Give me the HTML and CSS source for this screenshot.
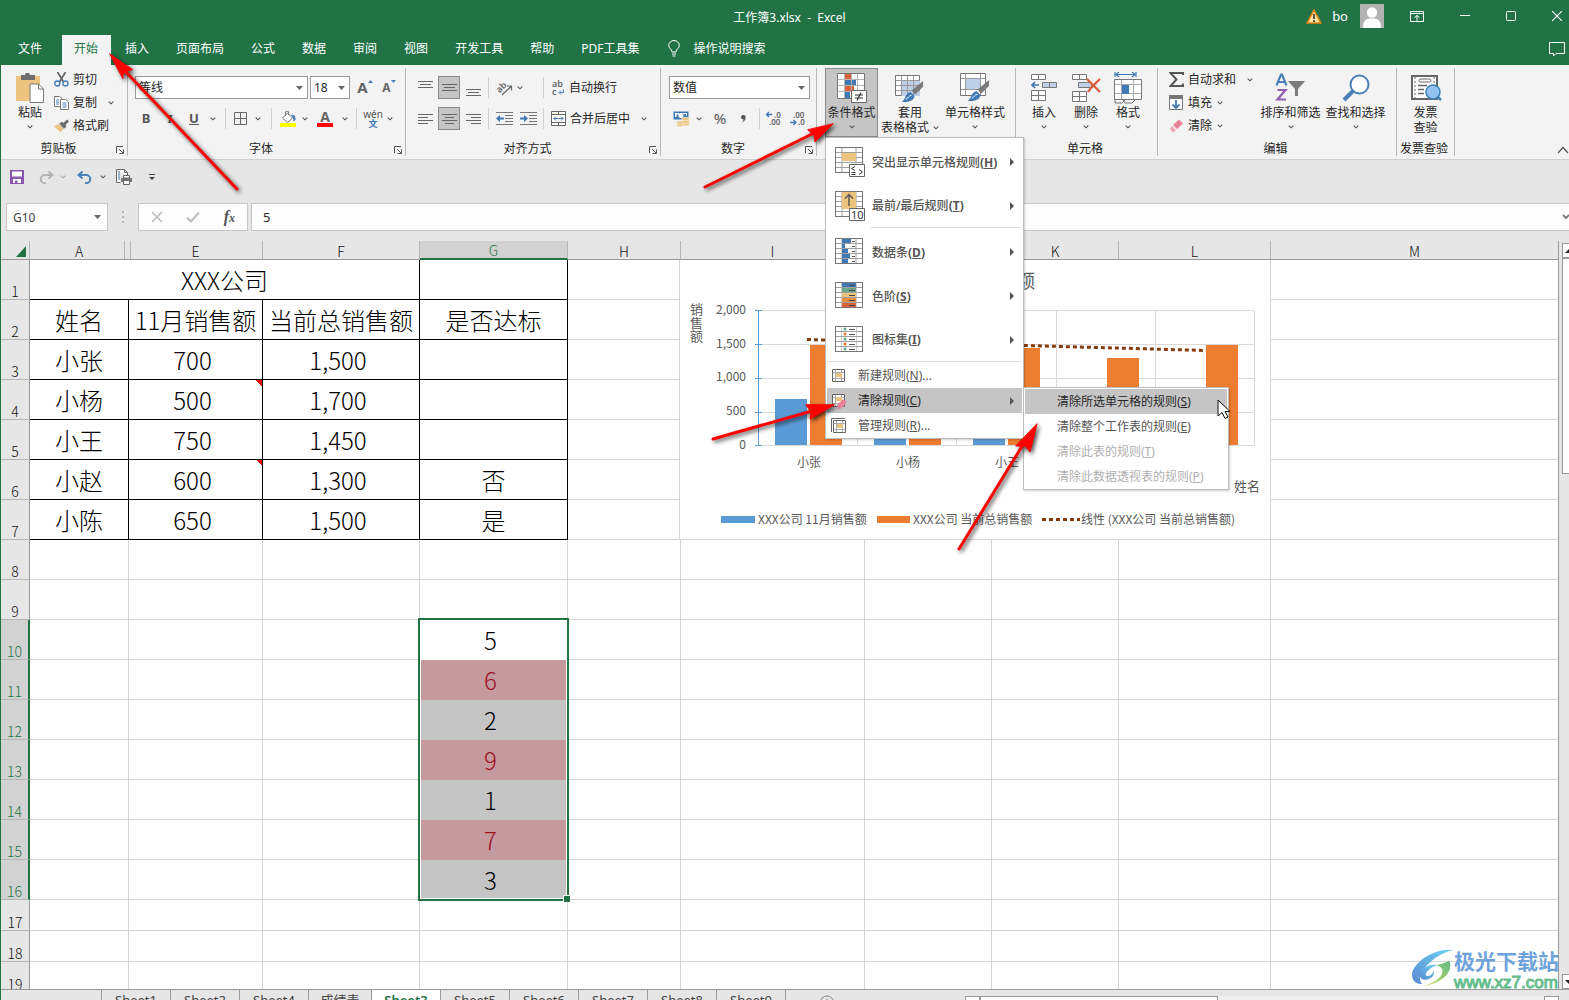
FILE: index.html
```html
<!DOCTYPE html>
<html lang="zh-CN">
<head>
<meta charset="utf-8">
<title>工作簿3.xlsx - Excel</title>
<link rel="stylesheet" href="styles.css">
</head>
<body>
<svg class="defs" width="0" height="0" aria-hidden="true">
  <symbol id="chev" viewBox="0 0 6 4"><path d="M.7.7 3 2.8 5.3.7" fill="none" stroke="#555" stroke-width="1.1"/></symbol>
  <symbol id="tri" viewBox="0 0 7 4"><path d="M0 0h7L3.500 4z" fill="#666"/></symbol>
  <symbol id="launch" viewBox="0 0 8 8"><path d="M.5 7V.5H7M3 3l4 4M7.500 3.500v4h-4" fill="none" stroke="#555"/></symbol>
  <symbol id="next" viewBox="0 0 4 8"><path d="M0 0l4 4-4 4z" fill="#555"/></symbol>
  <symbol id="grid" viewBox="0 0 28 26">
    <rect x=".5" y=".5" width="27" height="25" fill="#fff" stroke="#767676"/>
    <path d="M7 1v24M21 1v24M1 5.500h26M1 10.500h26M1 15.500h26M1 20.500h26" stroke="#a0a0a0" fill="none"/>
  </symbol>
  <symbol id="brush" viewBox="0 0 24 24">
    <path d="M23 1v6l-8 8-4-4z" fill="#7b7b7b"/><path d="M10 12.500l4 4c0 5-6 7-13 6.500 4-3 3-9 9-10.500z" fill="#4179b5"/><path d="M5 20c3-1 3-4 6-4" stroke="#fff" fill="none"/>
  </symbol>
</svg>
<div class="app">
  <header class="titlebar">
    <h1 class="doc-title">工作簿3.xlsx&nbsp; -&nbsp; Excel</h1>
    <div class="window-tools">
      <svg width="16" height="15" viewBox="0 0 16 15"><path d="M8 1l6.800 13H1.200z" fill="#fbe3a0" stroke="#e08214" stroke-width="1.600"/><path d="M8 5v5M8 11v2" stroke="#333" stroke-width="1.600"/></svg>
      <span class="user">bo</span>
      <svg width="24" height="24" viewBox="0 0 24 24"><path fill="#b3b3b3" d="M0 0h24v24H0z"/><circle cx="12" cy="8.500" r="5.200" fill="#fff"/><path d="M3 24c0-7 2-9.500 9-9.500s9 2.500 9 9.500z" fill="#fff"/></svg>
      <div class="window-buttons">
        <button aria-label="功能区显示选项"><svg width="14" height="12" viewBox="0 0 14 12" fill="none" stroke="#fff"><path d="M.5 1.500h13v10H.5zM.5 3.500h13M7 10.500v-5M4.500 7.500L7 5.500l2.500 2"/></svg></button>
        <button aria-label="最小化"><svg width="10" height="10" viewBox="0 0 10 10"><path d="M0 4.500h10" stroke="#fff"/></svg></button>
        <button aria-label="最大化"><svg width="10" height="10" viewBox="0 0 10 10"><rect x=".5" y=".5" width="9" height="9" rx="1" fill="none" stroke="#fff"/></svg></button>
        <button aria-label="关闭"><svg width="10" height="10" viewBox="0 0 10 10"><path d="M0 0l10 10M10 0L0 10" stroke="#fff" stroke-width="1.200"/></svg></button>
      </div>
    </div>
  </header>

  <nav class="tabs">
    <button class="file">文件</button>
    <button class="active">开始</button>
    <button>插入</button>
    <button>页面布局</button>
    <button>公式</button>
    <button>数据</button>
    <button>审阅</button>
    <button>视图</button>
    <button>开发工具</button>
    <button>帮助</button>
    <button>PDF工具集</button>
    <button class="tell-me"><svg width="12" height="17" viewBox="0 0 12 17" fill="none" stroke="#fff"><path d="M4 12c0-3-3.300-3.500-3.300-6.500a5.300 5 0 0 1 10.600 0C11.300 8.500 8 9 8 12zM4 14h4M4.500 16h3"/></svg>操作说明搜索</button>
    <button class="comment" aria-label="批注"><svg width="17" height="15" viewBox="0 0 17 15" fill="none" stroke="#fff"><path d="M.5.5h15v11H7L4.500 14v-2.500h-4z"/></svg></button>
  </nav>

  <section class="ribbon">
    <div class="group clipboard">
      <div class="body">
        <button class="big"><span class="pic"><svg width="30" height="30" viewBox="0 0 30 30"><path d="M1 3h24v25H1z" fill="#ecc47e"/><path d="M6 2h4c0-3 5-3 5 0h5v5H6z" fill="#6f6f6f"/><path d="M15 11h8.500l5 5v13.500H15z" fill="#fff" stroke="#777"/><path d="M23.500 11v5h5" fill="none" stroke="#777"/></svg></span><span>粘贴</span><svg class="chev"><use href="#chev"/></svg></button>
        <div class="stack">
          <button><svg width="15" height="15" viewBox="0 0 15 15" fill="none"><path d="M3.500 0l6 10M11.500 0l-6 10" stroke="#666" stroke-width="1.700"/><circle cx="3.300" cy="11.500" r="2.500" stroke="#4a7fb8" stroke-width="1.400"/><circle cx="11.500" cy="11.500" r="2.500" stroke="#4a7fb8" stroke-width="1.400"/></svg>剪切</button>
          <button><svg width="15" height="14" viewBox="0 0 15 14"><path d="M.5.5h5l3 2.500v7.500h-8z" fill="#fff" stroke="#777"/><path d="M6.500 3.500h5l3 2.500v7.500h-8z" fill="#fff" stroke="#777"/><path d="M2 4h3M2 6h3M2 8h3M8.500 7h4M8.500 9h4M8.500 11h4" stroke="#4a7fb8"/></svg>复制<svg class="chev far"><use href="#chev"/></svg></button>
          <button><svg width="15" height="14" viewBox="0 0 16 14"><path d="M0 7l5-2 5 5-3 4z" fill="#ecc47e"/><path d="M5.500 4.500L8 2.500l2 1L14 0l2 2-3.500 4 .5 2-2.500 2z" fill="#6f6f6f"/></svg>格式刷</button>
        </div>
      </div>
      <div class="label"><span>剪贴板</span><svg class="launch"><use href="#launch"/></svg></div>
    </div>

    <div class="group font">
      <div class="body rows">
        <div class="line">
          <label class="combo face"><input value="等线" aria-label="字体"><svg class="tri"><use href="#tri"/></svg></label>
          <label class="combo size"><input value="18" aria-label="字号"><svg class="tri"><use href="#tri"/></svg></label>
          <button class="grow" aria-label="增大字号"><b>A</b><svg width="5" height="3" viewBox="0 0 5 3"><path d="M0 3h5L2.500 0z" fill="#4a7fb8"/></svg></button>
          <button class="grow small" aria-label="减小字号"><b>A</b><svg width="5" height="3" viewBox="0 0 5 3"><path d="M0 0h5L2.500 3z" fill="#4a7fb8"/></svg></button>
        </div>
        <div class="font-tools">
          <button class="letter">B</button>
          <button class="letter italic">I</button>
          <button class="letter under">U</button>
          <svg class="chev"><use href="#chev"/></svg><i class="sep"></i>
          <button aria-label="边框"><svg width="13" height="13" viewBox="0 0 13 13"><path d="M.5.500h12v12H.5zM6.500 0v13M0 6.500h13" fill="none" stroke="#666"/></svg></button>
          <svg class="chev"><use href="#chev"/></svg><i class="sep"></i>
          <button aria-label="填充颜色"><svg width="17" height="16" viewBox="0 0 17 16"><path d="M2.500 7l5-5 5 5-5 4.500zM5.500 5V.7h3V4" fill="#fff" stroke="#777"/><path d="M11 4c3-1 5 1 4.500 5l-2 1.500C13.500 7 12.500 6 11 4z" fill="#4a7fb8"/><path d="M0 12h16v4H0z" fill="#ff0"/></svg></button>
          <svg class="chev"><use href="#chev"/></svg>
          <button class="color"><b>A</b><i></i></button>
          <svg class="chev"><use href="#chev"/></svg><i class="sep"></i>
          <button class="phonetic"><span>wén</span><b>文</b></button>
          <svg class="chev"><use href="#chev"/></svg>
        </div>
      </div>
      <div class="label"><span>字体</span><svg class="launch"><use href="#launch"/></svg></div>
    </div>

    <div class="group align">
      <div class="body rows">
        <div class="align-tools">
          <button aria-label="顶端对齐"><svg width="15" height="16" viewBox="0 0 15 16"><path d="M0 1.500h15M2 4.500h11M0 7.500h15" stroke="#666"/></svg></button>
          <button class="on" aria-label="垂直居中"><svg width="15" height="16" viewBox="0 0 15 16"><path d="M0 4.500h15M2 7.500h11M0 10.500h15" stroke="#666"/></svg></button>
          <button aria-label="底端对齐"><svg width="15" height="16" viewBox="0 0 15 16"><path d="M0 9.500h15M2 12.500h11M0 15.500h15" stroke="#666"/></svg></button>
          <i class="sep"></i>
          <button aria-label="方向"><svg width="17" height="17" viewBox="0 0 17 17"><text x="1" y="12" class="rot" transform="rotate(-45 5 10)">ab</text><path d="M6 16l9-8.500M15.500 11.500V7H11" fill="none" stroke="#666" stroke-width="1.200"/></svg></button>
          <svg class="chev lead"><use href="#chev"/></svg>
          <i class="sep"></i>
          <button class="wide"><svg width="14" height="16" viewBox="0 0 14 16"><text x="1" y="7" class="mini">ab</text><text x="1" y="15" class="mini">c</text><path d="M12.500 9.500v3H8.500M10 10.500l-2 2 2 2" fill="none" stroke="#4a7fb8"/></svg>自动换行</button>

          <button aria-label="左对齐"><svg width="15" height="12" viewBox="0 0 15 12"><path d="M0 1.500h15M0 4.500h10M0 7.500h15M0 10.500h10" stroke="#666"/></svg></button>
          <button class="on" aria-label="居中"><svg width="15" height="12" viewBox="0 0 15 12"><path d="M0 1.500h15M3 4.500h9M0 7.500h15M3 10.500h9" stroke="#666"/></svg></button>
          <button aria-label="右对齐"><svg width="15" height="12" viewBox="0 0 15 12"><path d="M0 1.500h15M5 4.500h10M0 7.500h15M5 10.500h10" stroke="#666"/></svg></button>
          <i class="sep"></i>
          <button aria-label="减少缩进"><svg width="17" height="13" viewBox="0 0 17 13"><path d="M0 .5h17M9 3.500h8M9 6.500h8M9 9.500h8M0 12.500h17" stroke="#777"/><path d="M0 6.500L4 3v2.500h4v2H4V10z" fill="#4179b5"/></svg></button>
          <button aria-label="增加缩进"><svg width="17" height="13" viewBox="0 0 17 13"><path d="M0 .5h17M9 3.500h8M9 6.500h8M9 9.500h8M0 12.500h17" stroke="#777"/><path d="M8 6.500L4 3v2.500H0v2h4V10z" fill="#4179b5"/></svg></button>
          <i class="sep"></i>
          <button class="wide"><svg width="15" height="15" viewBox="0 0 15 15"><path d="M.5.5h14v14H.5zM.5 3.500h14M.5 11.500h14M7.500 0v3.500M7.500 11.500V15" fill="#fff" stroke="#666"/><path d="M2.500 7.500h10M5 5.500l-2 2 2 2M10 5.500l2 2-2 2" fill="none" stroke="#4179b5"/></svg>合并后居中<svg class="chev far"><use href="#chev"/></svg></button>
        </div>
      </div>
      <div class="label"><span>对齐方式</span><svg class="launch"><use href="#launch"/></svg></div>
    </div>

    <div class="group number">
      <div class="body rows">
        <div class="line"><label class="combo fmt"><input value="数值" aria-label="数字格式"><svg class="tri"><use href="#tri"/></svg></label></div>
        <div class="number-tools">
          <button aria-label="会计数字格式"><svg width="17" height="16" viewBox="0 0 17 16"><path d="M.5.500h15v8H.5z" fill="#4179b5"/><path d="M2 2h4v1.500H3.500V6H2zM10 2h4v2.500h-1V3h-3z" fill="#fff"/><circle cx="8" cy="4.500" r="2.500" fill="#fff"/><g fill="#ecc47e" stroke="#f3f3f3" stroke-width=".6"><ellipse cx="12.500" cy="13" rx="4" ry="1.800"/><ellipse cx="12.500" cy="10.500" rx="4" ry="1.800"/><ellipse cx="12.500" cy="8" rx="4" ry="1.800"/><ellipse cx="7" cy="14" rx="3.500" ry="1.600"/><ellipse cx="7" cy="11.500" rx="3.500" ry="1.600"/></g></svg></button>
          <svg class="chev"><use href="#chev"/></svg>
          <button class="pct">%</button>
          <button aria-label="千位分隔样式"><svg width="5" height="8" viewBox="0 0 5 8"><path d="M0 2a2.300 2.200 0 1 1 4.600.5C4.500 5 3 7 .5 7.500 2 6.500 2.500 5.500 2.500 4.300 1 4.300 0 3.500 0 2z" fill="#555"/></svg></button>
          <i class="sep"></i>
          <button aria-label="增加小数位数"><svg width="16" height="15" viewBox="0 0 16 15"><text x="8" y="7" class="dec">.0</text><text x="3" y="14" class="dec">.00</text><path d="M0 3.500h6M3 1L.5 3.500 3 6" fill="none" stroke="#4179b5" stroke-width="1.300"/></svg></button>
          <button aria-label="减少小数位数"><svg width="16" height="15" viewBox="0 0 16 15"><text x="3" y="7" class="dec">.00</text><text x="8" y="14" class="dec">.0</text><path d="M0 11.500h6M3.500 9L6 11.500 3.500 14" fill="none" stroke="#4179b5" stroke-width="1.300"/></svg></button>
        </div>
      </div>
      <div class="label"><span>数字</span><svg class="launch"><use href="#launch"/></svg></div>
    </div>

    <div class="group styles">
      <div class="body">
        <div class="menu-anchor">
          <button class="big pressed"><span class="pic"><svg width="30" height="30" viewBox="0 0 30 30"><path d="M.5.5h27v25H.5z" fill="#fff"/><path d="M8 1h6v5H8zM8 13h9v6H8z" fill="#d9603b"/><path d="M8 7h11v5H8zM8 19h5v6H8z" fill="#4179b5"/><path d="M7.500 1v24M14.500 1v24M20.500 1v24M1 6.500h26M1 12.500h26M1 18.500h26" stroke="#b5b5b5" fill="none"/><path d="M.5.5h27v25H.5z" fill="none" stroke="#767676"/><path d="M14.500 17.500h15v12h-15z" fill="#fff" stroke="#666"/><path d="M18 22h8M18 25h8M24 19.500L20 27.500" stroke="#333" stroke-width="1.200"/></svg></span><span>条件格式</span><svg class="chev"><use href="#chev"/></svg></button>
          <ul class="menu">
            <li><button><span class="ico"><svg width="30" height="30" viewBox="0 0 30 30"><use href="#grid" width="28" height="26"/><path d="M7 6h14v8H7z" fill="#ecc47e"/><path d="M14.500 17.500h15v12h-15z" fill="#fff" stroke="#666"/><path d="M20 19.500l-3.500 2 3.500 2M16.500 25.500h4M16.500 27.500h4M24 22.500l3.500 2.500-3.500 2.500" fill="none" stroke="#333"/></svg></span>突出显示单元格规则<b>(<u>H</u>)</b><svg class="next"><use href="#next"/></svg></button></li>
            <li class="short"><button><span class="ico"><svg width="30" height="30" viewBox="0 0 30 30"><use href="#grid" width="28" height="26"/><path d="M7 1h14v17H7z" fill="#ecc47e"/><path d="M14 15V4M10 7.500L14 3.500l4 4" fill="none" stroke="#555" stroke-width="1.400"/><path d="M14.500 17.500h15v12h-15z" fill="#fff" stroke="#666"/><text x="16" y="28" class="ten">10</text></svg></span>最前/最后规则<b>(<u>T</u>)</b><svg class="next"><use href="#next"/></svg></button></li>
            <li class="rule inset"></li>
            <li><button><span class="ico"><svg width="30" height="30" viewBox="0 -1 30 30"><use href="#grid" width="28" height="26"/><path d="M7 1h9v4H7zM7 6h3v4H7zM7 11h6v4H7zM7 16h8v4H7zM7 21h6v4H7z" fill="#4179b5"/><path d="M17 3.500h3M17 8.500h3M17 13.500h3M17 18.500h3M17 23.500h3" stroke="#555"/></svg></span>数据条<b>(<u>D</u>)</b><svg class="next"><use href="#next"/></svg></button></li>
            <li><button><span class="ico"><svg width="30" height="30" viewBox="0 -1 30 30"><use href="#grid" width="28" height="26"/><path d="M7 1h14v4H7z" fill="#4179b5"/><path d="M7 6h14v4H7z" fill="#6aa58c"/><path d="M7 11h14v4H7z" fill="#ecc47e"/><path d="M7 16h14v4H7z" fill="#e88b3e"/><path d="M7 21h14v4H7z" fill="#d9603b"/><path d="M14 3.500h6M14 8.500h6M14 13.500h6M14 18.500h6M14 23.500h6" stroke="#444"/></svg></span>色阶<b>(<u>S</u>)</b><svg class="next"><use href="#next"/></svg></button></li>
            <li class="short"><button><span class="ico"><svg width="30" height="30" viewBox="0 -1 30 30"><use href="#grid" width="28" height="26"/><path d="M7 1h14v4H7zM7 6h14v4H7zM7 11h14v4H7zM7 16h14v4H7zM7 21h14v4H7z" fill="#fff"/><g fill="#5aa58c"><circle cx="10" cy="3" r="1.500"/><circle cx="10" cy="13" r="1.500"/><circle cx="10" cy="23" r="1.500"/></g><g fill="#e8702a"><circle cx="10" cy="8" r="1.500"/><circle cx="10" cy="18" r="1.500"/></g><path d="M14 3.500h6M14 8.500h6M14 13.500h6M14 18.500h6M14 23.500h6" stroke="#555"/></svg></span>图标集<b>(<u>I</u>)</b><svg class="next"><use href="#next"/></svg></button></li>
            <li class="rule"></li>
            <li class="slim"><button><span class="ico"><svg width="16" height="16" viewBox="0 0 16 16"><path d="M1.500 1.500h12v12h-12z" fill="#fff" stroke="#666"/><path d="M4.500 2v11M10.500 2v11M2 4.500h11M2 10.500h11" stroke="#aaa"/><path d="M5 5h6v4H5z" fill="#ecc47e"/></svg></span>新建规则(<u>N</u>)...</button></li>
            <li class="slim open"><button><span class="ico"><svg width="16" height="16" viewBox="0 0 16 16"><path d="M1.500 1.500h12v12h-12z" fill="#fff" stroke="#666"/><path d="M4.500 2v11M10.500 2v11M2 4.500h11M2 10.500h11" stroke="#aaa"/><path d="M5 4h6v4H5z" fill="#ecc47e"/><path d="M6 12l6-6 4 3-6 6.500-3 .5z" fill="#e88398"/></svg></span>清除规则(<u>C</u>)<svg class="next"><use href="#next"/></svg></button>
              <ul class="menu sub">
                <li class="slim open"><button>清除所选单元格的规则(<u>S</u>)</button></li>
                <li class="slim"><button>清除整个工作表的规则(<u>E</u>)</button></li>
                <li class="slim"><button disabled>清除此表的规则(<u>T</u>)</button></li>
                <li class="slim"><button disabled>清除此数据透视表的规则(<u>P</u>)</button></li>
              </ul>
            </li>
            <li class="slim"><button><span class="ico"><svg width="16" height="16" viewBox="0 0 16 16"><path d="M.5 14V.5H14" fill="none" stroke="#666"/><path d="M2.500 2.500h12v12h-12z" fill="#fff" stroke="#666"/><path d="M5.500 3v11M11.500 3v11M3 5.500h11M3 11.500h11" stroke="#aaa"/><path d="M6 6h6v4H6z" fill="#ecc47e"/></svg></span>管理规则(<u>R</u>)...</button></li>
          </ul>
        </div>
        <button class="big table-style"><span class="pic"><svg width="30" height="30" viewBox="0 0 30 30"><path d="M.5 2.500h24v20H.5z" fill="#fff" stroke="#767676"/><path d="M7 8h18v15H7z" fill="#bdd0e8"/><path d="M6.500 3v20M12.500 3v20M18.500 3v20M1 7.500h24M1 12.500h24M1 17.500h24" stroke="#999"/><use href="#brush" x="6" y="7" width="23" height="23"/></svg></span><span>套用</span><span class="with-chev">表格格式<svg class="chev"><use href="#chev"/></svg></span></button>
        <button class="big cell-style"><span class="pic"><svg width="30" height="30" viewBox="0 0 30 30"><path d="M.5.500h25v22H.5z" fill="#fff" stroke="#767676"/><path d="M5.500 1v21M20.500 1v21M1 5.500h25M1 16.500h25" stroke="#999"/><path d="M6 6h14v10H6z" fill="#bdd0e8"/><use href="#brush" x="7" y="6" width="23" height="23"/></svg></span><span>单元格样式</span><svg class="chev"><use href="#chev"/></svg></button>
      </div>
      <div class="label"><span>样式</span></div>
    </div>

    <div class="group cells">
      <div class="body">
        <button class="big"><span class="pic"><svg width="28" height="30" viewBox="0 0 28 30"><path d="M1.500 1.500h14v5h-14zM8.500 1.500v5M1.500 17.500h14v10h-14zM8.500 17.500v10M1.500 22.500h14" fill="#fff" stroke="#777"/><path d="M12.500 9.500h14v5h-14zM19.500 9.500v5" fill="#bdd0e8" stroke="#777"/><path d="M2 12h7M5 9l-3 3 3 3" fill="none" stroke="#4179b5" stroke-width="1.700"/></svg></span><span>插入</span><svg class="chev"><use href="#chev"/></svg></button>
        <button class="big"><span class="pic"><svg width="30" height="30" viewBox="0 0 30 30"><path d="M1.500 1.500h14v5h-14zM8.500 1.500v5M1.500 18.500h14v10h-14zM8.500 18.500v10M1.500 23.500h14" fill="#fff" stroke="#777"/><path d="M7.500 9.500h13v5h-13z" fill="#bdd0e8" stroke="#777"/><path d="M16 6l13 13M29 6C24 11 20 14 17 19" fill="none" stroke="#d9603b" stroke-width="2.200"/></svg></span><span>删除</span><svg class="chev"><use href="#chev"/></svg></button>
        <button class="big"><span class="pic"><svg width="28" height="32" viewBox="0 0 28 32"><path d="M1 0v5M22 0v5M2 2.500h19M5 0L2 2.500 5 5M18 0l3 2.500L18 5" fill="none" stroke="#4179b5" stroke-width="1.200"/><path d="M.5 7.500h27v20H.5z" fill="#fff" stroke="#777"/><path d="M7.500 8v19M19.500 8v19M1 12.500h26M1 21.500h26" stroke="#aaa"/><path d="M8 13h7v9H8z" fill="#4179b5"/><path d="M1 28v3h7l3-3h-2l2 3h7l3-3" fill="none" stroke="#777"/></svg></span><span>格式</span><svg class="chev"><use href="#chev"/></svg></button>
      </div>
      <div class="label"><span>单元格</span></div>
    </div>

    <div class="group editing">
      <div class="body">
        <div class="stack">
          <button><svg width="15" height="15" viewBox="0 0 15 15"><path d="M14 3V1H1.500l6 6.500-6 6.500H14v-2.500" fill="none" stroke="#555" stroke-width="2"/></svg>自动求和<svg class="chev far"><use href="#chev"/></svg></button>
          <button><svg width="15" height="15" viewBox="0 0 15 15"><path d="M.5.500h13v14H.5z" fill="#fff" stroke="#777"/><path d="M0 0h14v4H0z" fill="#777"/><path d="M7 5v8M3.500 9.500L7 13l3.500-3.500" fill="none" stroke="#4179b5" stroke-width="1.800"/></svg>填充<svg class="chev"><use href="#chev"/></svg></button>
          <button><svg width="15" height="14" viewBox="0 0 15 14"><path d="M4 6l6-5.500 4 4L8 10z" fill="#e88398"/><path d="M3 7l4 4-2 2H3L1 10z" fill="#f0a9b7"/></svg>清除<svg class="chev"><use href="#chev"/></svg></button>
        </div>
        <button class="big sort"><span class="pic"><svg width="32" height="30" viewBox="0 0 32 30" fill="none"><path d="M1.500 12.500L6 1.500h1l4.500 11M3 9h7" stroke="#4a7fb8" stroke-width="2.200"/><path d="M2.500 17h8L2.500 26.500h8.500" stroke="#8f5fb0" stroke-width="2.200"/><path d="M13 8h17l-7 8v7h-3v-7z" fill="#7b7b7b"/></svg></span><span>排序和筛选</span><svg class="chev"><use href="#chev"/></svg></button>
        <button class="big find"><span class="pic"><svg width="28" height="28" viewBox="0 0 28 28"><path d="M2 26l9-9" stroke="#4a7fb8" stroke-width="4"/><circle cx="17.500" cy="10.500" r="9" fill="#fff" stroke="#4a7fb8" stroke-width="2"/></svg></span><span>查找和选择</span><svg class="chev"><use href="#chev"/></svg></button>
      </div>
      <div class="label"><span>编辑</span></div>
    </div>

    <div class="group invoice">
      <div class="body">
        <button class="big"><span class="pic"><svg width="32" height="28" viewBox="0 0 32 28"><path d="M2 2h25v23H2z" fill="#fff" stroke="#666" stroke-width="2"/><path d="M5 3v21M24 3v21" stroke="#666" stroke-dasharray="2 2"/><rect x="9" y="5" width="12" height="3" rx="1.500" fill="#fff" stroke="#666"/><path d="M8 11.500h9M8 15.500h6M8 19.500h6" stroke="#666" stroke-width="1.500"/><circle cx="23" cy="18" r="7" fill="#94c3f3" stroke="#3a7fb5" stroke-width="1.500"/><path d="M28 23l3 3" stroke="#3a7fb5" stroke-width="2.500"/></svg></span><span>发票</span><span>查验</span></button>
      </div>
      <div class="label"><span>发票查验</span></div>
    </div>
    <button class="collapse" aria-label="折叠功能区"><svg width="12" height="8" viewBox="0 0 12 8"><path d="M1 7l5-5.500L11 7" fill="none" stroke="#555" stroke-width="1.200"/></svg></button>
  </section>

  <div class="quick-access">
    <button aria-label="保存"><svg width="14" height="14" viewBox="0 0 14 14"><path d="M0 0h14v14H0z" fill="#8a55ae"/><path d="M2 1.500h10v5H2zM3 9h8v4H3z" fill="#fff"/><path d="M5 10.500h2.500V14H5z" fill="#8a55ae"/></svg></button>
    <button aria-label="恢复"><svg width="15" height="13" viewBox="0 0 15 13"><path d="M13 4H6a4.200 4 0 0 0 0 8.200h1M9.500.5L13.500 4 9.500 7.500" fill="none" stroke="#b3b3b3" stroke-width="2"/></svg></button>
    <svg class="chev faint"><use href="#chev"/></svg>
    <button aria-label="撤销"><svg width="15" height="13" viewBox="0 0 15 13"><path d="M2 4h7a4.200 4 0 0 1 0 8.200H8M5.500.5L1.500 4l4 3.500" fill="none" stroke="#4a7fb8" stroke-width="2"/></svg></button>
    <svg class="chev"><use href="#chev"/></svg>
    <button aria-label="打印预览"><svg width="17" height="16" viewBox="0 0 17 16"><path d="M.5.500h8l3 3V7M.5.5v13h4M8.500.5v3h3" fill="#fff" stroke="#666"/><path d="M3 2v9" stroke="#4a7fb8"/><path d="M5 9h11v4H5z" fill="#777"/><path d="M7.500 6.500h6V9h-6zM7.500 11.500h6v4h-6z" fill="#fff" stroke="#666"/></svg></button>
    <button aria-label="自定义快速访问工具栏"><svg width="6" height="7" viewBox="0 0 6 7"><path d="M0 .5h6" stroke="#444"/><path d="M0 3h6L3 6z" fill="#444"/></svg></button>
  </div>

  <div class="formula-bar">
    <label class="name-box"><input value="G10" aria-label="名称框"><svg class="tri"><use href="#tri"/></svg></label>
    <svg class="dots" width="3" height="12" viewBox="0 0 3 12"><path d="M0 0h2v2H0zM0 5h2v2H0zM0 10h2v2H0z" fill="#b5b5b5"/></svg>
    <div class="fx">
      <svg width="12" height="12" viewBox="0 0 12 12"><path d="M1 1l10 10M11 1L1 11" stroke="#bdbdbd" stroke-width="1.600"/></svg>
      <svg width="14" height="12" viewBox="0 0 14 12"><path d="M1 6.500l4 4L13 1.500" fill="none" stroke="#bdbdbd" stroke-width="2"/></svg>
      <span>f<small>x</small></span>
    </div>
    <label class="formula"><input value="5" aria-label="编辑栏"><svg width="7" height="6" viewBox="0 0 7 6"><path d="M1 1l3 3 3-3" fill="none" stroke="#777" stroke-width="1.800"/></svg></label>
  </div>

  <main class="sheet-area">
    <div class="sheet">
      <table>
        <colgroup><col class="c-head"><col class="c-a"><col class="c-e"><col class="c-f"><col class="c-g"><col class="c-h"><col class="c-i"><col class="c-j"><col class="c-j"><col class="c-l"><col></colgroup>
        <thead><tr><th class="corner"><svg width="10" height="11" viewBox="0 0 10 11"><path d="M10 0v11H0z" fill="#217346"/></svg></th><th class="skip">A</th><th>E</th><th>F</th><th class="sel">G</th><th>H</th><th>I</th><th>J</th><th>K</th><th>L</th><th>M</th></tr></thead>
        <tbody>
          <tr class="data"><th>1</th><td colspan="3">XXX公司</td><td></td><td></td><td></td><td></td><td></td><td></td><td></td></tr>
          <tr class="data"><th>2</th><td>姓名</td><td>11月销售额</td><td>当前总销售额</td><td>是否达标</td><td></td><td></td><td></td><td></td><td></td><td></td></tr>
          <tr class="data"><th>3</th><td>小张</td><td class="n">700</td><td class="n">1,500</td><td></td><td></td><td></td><td></td><td></td><td></td><td></td></tr>
          <tr class="data"><th>4</th><td>小杨</td><td class="n note">500</td><td class="n">1,700</td><td></td><td></td><td></td><td></td><td></td><td></td><td></td></tr>
          <tr class="data"><th>5</th><td>小王</td><td class="n">750</td><td class="n">1,450</td><td></td><td></td><td></td><td></td><td></td><td></td><td></td></tr>
          <tr class="data"><th>6</th><td>小赵</td><td class="n note">600</td><td class="n">1,300</td><td>否</td><td></td><td></td><td></td><td></td><td></td><td></td></tr>
          <tr class="data"><th>7</th><td>小陈</td><td class="n">650</td><td class="n">1,500</td><td>是</td><td></td><td></td><td></td><td></td><td></td><td></td></tr>
          <tr><th>8</th><td></td><td></td><td></td><td></td><td></td><td></td><td></td><td></td><td></td><td></td></tr>
          <tr><th>9</th><td></td><td></td><td></td><td></td><td></td><td></td><td></td><td></td><td></td><td></td></tr>
          <tr class="picked"><th>10</th><td></td><td></td><td></td><td class="n first">5</td><td></td><td></td><td></td><td></td><td></td><td></td></tr>
          <tr class="picked"><th>11</th><td></td><td></td><td></td><td class="n hot">6</td><td></td><td></td><td></td><td></td><td></td><td></td></tr>
          <tr class="picked"><th>12</th><td></td><td></td><td></td><td class="n gray">2</td><td></td><td></td><td></td><td></td><td></td><td></td></tr>
          <tr class="picked"><th>13</th><td></td><td></td><td></td><td class="n hot">9</td><td></td><td></td><td></td><td></td><td></td><td></td></tr>
          <tr class="picked"><th>14</th><td></td><td></td><td></td><td class="n gray">1</td><td></td><td></td><td></td><td></td><td></td><td></td></tr>
          <tr class="picked"><th>15</th><td></td><td></td><td></td><td class="n hot">7</td><td></td><td></td><td></td><td></td><td></td><td></td></tr>
          <tr class="picked"><th>16</th><td></td><td></td><td></td><td class="n gray">3</td><td></td><td></td><td></td><td></td><td></td><td></td></tr>
          <tr class="low"><th>17</th><td></td><td></td><td></td><td></td><td></td><td></td><td></td><td></td><td></td><td></td></tr>
          <tr class="low"><th>18</th><td></td><td></td><td></td><td></td><td></td><td></td><td></td><td></td><td></td><td></td></tr>
          <tr class="low"><th>19</th><td></td><td></td><td></td><td></td><td></td><td></td><td></td><td></td><td></td><td></td></tr>
        </tbody>
      </table>
      <div class="selection"></div>
      <svg class="chart" width="592" height="280" viewBox="679 260 592 280">
        <path d="M679.500 259.500h591v280h-591z" fill="#fff" stroke="#d4d4d4"/>
        <g stroke="#d9d9d9" fill="none"><path d="M758 310.500h496.500V445M758 344.500h496M758 378.500h496M758 412.500h496M758 445.500h497M857.500 310v135M956.500 310v135M1056.500 310v135M1155.500 310v135"/></g>
        <path d="M758.500 310v136M755 310.500h7M755 344.500h7M755 378.500h7M755 412.500h7M755 445.500h7" stroke="#5b9bd5"/>
        <g fill="#5b9bd5"><path d="M775 399h32v46h-32zM874 412h32v33h-32zM973 395h32v50h-32zM1072 405h32v40h-32zM1171 402h32v43h-32z"/></g>
        <g fill="#ed7d31"><path d="M810 345h32v100h-32zM909 331h32v114h-32zM1008 348h32v97h-32zM1107 358h32v87h-32zM1206 345h32v100h-32z"/></g>
        <path d="M807 339.500L1206 350.500" stroke="#843c0c" stroke-width="3" stroke-dasharray="4 3"/>
        <g class="axis">
          <text x="746" y="314" text-anchor="end">2,000</text><text x="746" y="348" text-anchor="end">1,500</text><text x="746" y="381" text-anchor="end">1,000</text><text x="746" y="415" text-anchor="end">500</text><text x="746" y="449" text-anchor="end">0</text>
          <text x="809" y="467" text-anchor="middle">小张</text><text x="908" y="467" text-anchor="middle">小杨</text><text x="1007" y="467" text-anchor="middle">小王</text><text x="1106" y="467" text-anchor="middle">小赵</text><text x="1205" y="467" text-anchor="middle">小陈</text>
          <text x="758" y="524">XXX公司 11月销售额</text><text x="913" y="524">XXX公司 当前总销售额</text><text x="1081" y="524">线性 (XXX公司 当前总销售额)</text>
        </g>
        <g class="axis-title"><text x="690" y="314">销</text><text x="690" y="328">售</text><text x="690" y="341">额</text><text x="1234" y="491">姓名</text></g>
        <text class="chart-title" x="1035" y="288" text-anchor="end">销售额</text>
        <path d="M721 516h34v7h-34z" fill="#5b9bd5"/><path d="M877 516h33v7h-33z" fill="#ed7d31"/><path d="M1042 519.500h38" stroke="#843c0c" stroke-width="3" stroke-dasharray="4 3"/>
      </svg>
    </div>
    <div class="scroll">
      <button aria-label="向上滚动"><svg width="8" height="4" viewBox="0 0 8 4"><path d="M4 0l4 4H0z" fill="#222"/></svg></button>
      <div class="thumb"></div>
      <button class="down" aria-label="向下滚动"><svg width="8" height="4" viewBox="0 0 8 4"><path d="M0 0h8L4 4z" fill="#222"/></svg></button>
    </div>
    <div class="watermark">
      <svg width="44" height="40" viewBox="0 0 44 42"><defs><linearGradient id="wa" x1="1" y1="0" x2="0" y2="1"><stop offset="0" stop-color="#6bd2f5"/><stop offset="1" stop-color="#5b8bd0"/></linearGradient><linearGradient id="wb" x1="1" y1="0" x2="0" y2="1"><stop offset="0" stop-color="#5fb98a"/><stop offset="1" stop-color="#e6e04e"/></linearGradient></defs>
        <path d="M44 1C24-1 2 14 1 27c0 6 4 10 11 10-4-4-4-11 2-17C21 12 31 4 44 1z" fill="url(#wa)"/>
        <path d="M40 12c5 10-4 25-35 28 14-1 29-9 28-18-1-3-4-5-8-5 6-1 11-2 15-5z" fill="url(#wb)"/>
        <path d="M27 17c-8-2-17 4-18 10 0 4 4 6 8 5 5-1 8-5 7-9-2 4-5 6-8 5-2-1 1-7 11-11z" fill="url(#wa)"/></svg>
      <p><strong>极光下载站</strong><span>www.xz7.com</span></p>
    </div>
  </main>

  <footer class="sheet-tabs">
    <i class="lead"></i>
    <button>Sheet1</button><button>Sheet2</button><button>Sheet4</button><button class="narrow">成绩表</button><button class="active">Sheet3</button><button>Sheet5</button><button>Sheet6</button><button>Sheet7</button><button>Sheet8</button><button>Sheet9</button>
    <svg class="add" width="16" height="16" viewBox="0 0 16 16"><circle cx="8" cy="8" r="7" fill="none" stroke="#888"/><path d="M8 4v8M4 8h8" stroke="#888"/></svg>
    <div class="hscroll"><i></i><i class="bar"></i><i class="track"></i><i></i></div>
  </footer>

  <svg class="overlay" width="1569" height="1000" viewBox="0 0 1569 1000" aria-hidden="true">
    <g class="arrows">
      <path d="M237 189L125 71" /><path class="head" d="M110 54l22.500 15.500-5.500 1.500-4 3.500 0 4z"/>
      <path d="M705 187L812 134"/><path class="head" d="M833 124l-18 18-1-7-6-5z"/>
      <path d="M713 439L812 411"/><path class="head" d="M834 405l-24 14 1-7-5-7z"/>
      <path d="M959 549L1024 443"/><path class="head" d="M1037 424l-7 28-5-6-9 0z"/>
    </g>
    <path d="M1218 400v16l4-3.500 3 6 3-1.500-3-5.500h5z" fill="#fff" stroke="#111"/>
  </svg>
</div>
</body>
</html>
```
FILE: styles.css
```css
* { box-sizing: border-box; }
body {
  margin: 0;
  overflow: hidden;
  font: 12px/15px "Noto Sans", "Noto Sans CJK SC", sans-serif;
  color: #262626;
  background: #e6e6e6;
}
button, input {
  margin: 0;
  padding: 0;
  border: 0;
  background: none;
  font: inherit;
  color: inherit;
}
button { display: flex; align-items: center; justify-content: center; white-space: nowrap; }
input { width: 100%; min-width: 0; outline: 0; }
svg { flex: none; display: block; }
.defs { position: absolute; }
.app {
  position: relative;
  display: flex;
  flex-direction: column;
  height: 100vh;
  overflow: hidden;
  border-left: 1px solid #217346;
}
.chev { width: 6px; height: 4px; }
.tri { width: 7px; height: 4px; }
.launch { width: 8px; height: 8px; }
.next { width: 4px; height: 8px; }
.sep { width: 1px; height: 21px; background: #d0d0d0; }

/* title bar */
.titlebar {
  display: grid;
  grid-template-columns: 1fr auto 1fr;
  height: 35px;
  padding-left: 9px;
  background: #217346;
  color: #fff;
}
.doc-title {
  grid-column: 2;
  align-self: center;
  margin: 0;
  font-size: 12px;
  font-weight: 400;
}
.window-tools { display: flex; align-items: center; justify-content: flex-end; height: 32px; }
.user { margin: 0 12px 0 10px; font-size: 13px; }
.window-buttons { display: flex; align-items: center; gap: 36px; padding: 0 7px 0 26px; }

/* ribbon tabs */
.tabs { display: flex; gap: 2px; height: 30px; padding-left: 5px; background: #217346; color: #fff; }
.tabs button { padding: 0 13px 3px 12px; }
.tabs .file { margin-right: 5px; }
.tabs .active { background: #f3f3f3; color: #217346; }
.tabs .tell-me { gap: 13px; padding-left: 14px; }
.tabs .comment { margin-left: auto; padding: 0 3px 2px 0; }

/* ribbon */
.ribbon { display: flex; height: 95px; padding-top: 3px; background: #f3f3f3; border-bottom: 1px solid #d0d0d0; }
.group { display: flex; flex-direction: column; height: 88px; border-right: 1px solid #b8b8b8; flex: none; }
.body { display: flex; height: 71px; }
.label { display: flex; align-items: center; height: 17px; padding: 2px 3px 0 0; text-align: center; }
.label span { flex: 1; }
.label .launch { margin-top: 2px; }
.rows { flex-direction: column; gap: 8px; padding-top: 8px; }
.line { display: flex; align-items: center; }
.big { flex-direction: column; justify-content: flex-start; padding-top: 4px; height: 69px; }
.big .pic { display: flex; align-items: center; justify-content: center; height: 31px; margin-bottom: 2px; }
.big > .chev { margin-top: 5px; }
.stack { display: flex; flex-direction: column; }
.stack button { justify-content: flex-start; gap: 4px; height: 23px; }
.stack .chev { margin-left: 1px; }
.stack .chev.far { margin-left: 7px; }
.combo, .name-box, .formula { display: flex; align-items: center; background: #fff; }
.combo { height: 23px; padding: 0 4px 0 3px; border: 1px solid #999; }

.clipboard { width: 127px; }
.clipboard .label { padding-left: 0; }
.clipboard .big { width: 53px; padding-left: 5px; }
.font { width: 278px; }
.font .body { padding-left: 6px; }
.align { width: 255px; }
.align .body { padding-left: 7px; }
.number { width: 156px; }
.number .body { padding-left: 8px; }
.styles { width: 199px; }
.styles .body { padding-left: 8px; }
.cells { width: 142px; }
.cells .body { padding-left: 7px; }
.cells .big { width: 42px; }
.editing { width: 239px; }
.editing .body { padding-left: 11px; }
.editing .stack { width: 89px; }
.invoice { width: 58px; }
.invoice .big { width: 57px; }

.face { width: 173px; margin: 0 2px 0 1px; }
.size { width: 40px; }
.fmt { width: 141px; }
.grow { width: 24px; align-items: flex-start; color: #666; font-size: 15px; }
.grow:first-of-type { margin-left: 3px; }
.grow.small { font-size: 12px; }
.font-tools, .align-tools, .number-tools { display: grid; align-items: center; justify-items: center; }
.font-tools { grid-template: 23px / 24px 24px 24px 14px 11px 18px 18px 8px 26px 8px 32px 8px 14px 20px 14px; justify-content: start; }
.letter { font-weight: 700; font-size: 13px; color: #555; }
.italic { font-style: italic; font-family: "Liberation Serif", serif; }
.under { text-decoration: underline; }
.color { flex-direction: column; color: #666; font-size: 14px; line-height: 13px; }
.color i { width: 16px; height: 4px; background: #f00; }
.phonetic { flex-direction: column; font-size: 10px; line-height: 9px; color: #555; }
.phonetic b { color: #4179b5; font-size: 9px; }
.align-tools { grid-template: 23px 23px / 24px 24px 24px 6px 26px 22px 8px auto; row-gap: 8px; justify-content: start; }
.align-tools .on { width: 22px; height: 23px; background: #c5c5c5; border: 1px solid #8a8a8a; }
.align-tools .lead { justify-self: start; }
.align-tools .wide { justify-self: start; gap: 4px; margin-left: 4px; }
.align-tools .far { margin-left: 7px; }
.number-tools { grid-template: 23px / 24px 12px 30px 16px 16px 14px 34px; }
.pct { font-size: 15px; color: #555; }
.mini, .dec, .rot { font: 600 9px/9px "Noto Sans", sans-serif; fill: #666; }
.dec { font-size: 8px; }
.ten { font: 11px "Noto Sans", sans-serif; fill: #333; }

.menu-anchor { position: relative; align-self: flex-start; }
.menu-anchor > .big { width: 53px; }
.pressed { background: #c5c5c5; border: 1px solid #8a8a8a; padding-top: 3px; }
.table-style { width: 64px; }
.with-chev { display: flex; align-items: center; gap: 4px; }
.cell-style { width: 66px; }
.sort, .find { width: 65px; }
.collapse { margin: auto 0 0 auto; padding: 0 0 5px; }

/* drop-down menus */
.menu {
  position: absolute;
  z-index: 5;
  top: 100%;
  left: 0;
  width: 199px;
  margin: 0;
  padding: 2px 1px 0;
  list-style: none;
  background: #fff;
  border: 1px solid #bdbdbd;
  box-shadow: 1px 1px 2px rgba(0, 0, 0, .2);
  color: #555;
}
.menu li { position: relative; height: 44px; }
.menu li.short { height: 43px; }
.menu li.slim { height: 25px; }
.menu li.rule { height: 1px; margin-bottom: 1px; background: #dcdcdc; }
.menu li.inset { margin: 0 0 2px 44px; }
.menu button { width: 100%; height: 100%; justify-content: flex-start; padding-right: 8px; font-weight: 500; }
.menu .ico { width: 30px; margin: 0 7px 0 8px; }
.menu .slim button { font-weight: 400; }
.menu .slim .ico { width: 16px; margin: 0 11px 0 4px; }
.menu .next { margin-left: auto; }
.menu .open { background: #c5c5c5; }
.menu .open > button { color: #262626; }
.menu.sub { top: -1px; left: 196px; width: 206px; padding-top: 1px; }
.menu.sub button { padding-left: 32px; }
.menu.sub button:disabled { color: #b0b0b0; }

/* quick access and formula bar */
.quick-access {
  display: grid;
  grid-template-columns: 32px 26px 8px 34px 4px 38px 18px;
  align-items: center;
  justify-items: center;
  height: 43px;
  padding-bottom: 9px;
}
.faint { opacity: .4; }
.formula-bar { display: flex; align-items: center; height: 28px; margin-bottom: 10px; padding-left: 5px; font-size: 13px; }
.name-box, .fx, .formula { height: 28px; border: 1px solid #c6c6c6; background: #fdfdfd; }
.name-box { width: 102px; padding: 0 6px; color: #444; }
.name-box input { font-size: 12px; }
.dots { margin: 0 13px 0 14px; }
.fx { display: flex; align-items: center; justify-content: space-between; width: 110px; padding: 0 12px; color: #555; }
.fx span { font: italic 700 16px/20px "Liberation Serif", serif; }
.fx small { font-size: 12px; }
.formula { flex: 1; margin-left: 3px; padding-left: 11px; border-right: 0; }

/* worksheet */
.sheet-area { position: relative; flex: 1; display: flex; min-height: 0; overflow: hidden; }
.sheet { position: relative; flex: 1; overflow: hidden; border-right: 1px solid #999; }
table { width: 100%; table-layout: fixed; border-collapse: separate; border-spacing: 0; font-family: "Noto Sans CJK SC", sans-serif; background: #fff; }
.c-head { width: 29px; }
.c-a { width: 99px; }
.c-e { width: 134px; }
.c-f { width: 157px; }
.c-g { width: 148px; }
.c-h { width: 113px; }
.c-i { width: 184px; }
.c-j { width: 127px; }
.c-l { width: 152px; }
th { padding: 0; font-weight: 300; font-size: 14px; line-height: 16px; background: #e6e6e6; color: #111; }
thead th { position: relative; height: 19px; padding-top: 1px; border-right: 1px solid #b5b5b5; border-bottom: 1px solid #999; }
thead th:last-child { border-right: 0; }
thead .sel { background: #d2d2d2; color: #217346; border-bottom: 2px solid #217346; line-height: 15px; }
thead .skip { z-index: 1; }
.skip::after { content: ""; position: absolute; top: 0; right: -3px; width: 5px; height: 18px; background: #e6e6e6; border: solid #b5b5b5; border-width: 0 1px; }
.corner svg { margin: 2px 0 0 15px; }
tbody th { height: 40px; vertical-align: bottom; border-right: 1px solid #999; border-bottom: 1px solid #b5b5b5; }
.low th { height: 31px; }
td { height: 40px; padding: 0; text-align: center; font-weight: 300; font-size: 24px; line-height: 32px; color: #000; border-right: 1px solid #d4d4d4; border-bottom: 1px solid #d4d4d4; }
td:last-child { border-right: 0; }
.low td { height: 31px; }
td.n { padding-right: 6px; }
.data td:nth-child(-n+5) { border-color: #000; }
.data:first-child td:nth-child(n+4) { border-color: #d4d4d4; }
.note { background: linear-gradient(45deg, transparent 50%, #f00 50%) top right / 6px 6px no-repeat; }
.picked th { background: #d2d2d2; color: #217346; border-right: 2px solid #217346; }
.hot { background: #c59a9f; color: #9c0f1c; border-bottom-color: #c59a9f; }
.gray { background: #c5c5c5; border-bottom-color: #c5c5c5; }
.first { border-bottom-color: #fff; }
.selection { position: absolute; left: 417px; top: 377px; width: 151px; height: 283px; border: 2px solid #217346; box-shadow: inset 0 0 0 1px #fff; }
.selection::after { content: ""; position: absolute; right: -3px; bottom: -3px; width: 6px; height: 6px; background: #217346; border: solid #fff; border-width: 1px 0 0 1px; }
.chart { position: absolute; left: 678px; top: 19px; font-family: "Noto Sans CJK SC", sans-serif; }
.axis { font-size: 12px; fill: #595959; }
.axis-title { font-size: 13px; fill: #595959; }
.chart-title { font-size: 19px; fill: #595959; }

.scroll { display: flex; flex-direction: column; width: 10px; padding: 2px 0 0 3px; }
.scroll button { height: 15px; width: 14px; border: 1px solid #999; background: #fff; }
.scroll .thumb { height: 216px; width: 14px; border: 1px solid #999; background: #fff; }
.scroll .down { margin-top: auto; }
.watermark { position: absolute; right: 10px; bottom: 0; display: flex; align-items: flex-end; }
.watermark p { margin: 0; display: flex; flex-direction: column; font-family: "Liberation Sans", "Noto Sans CJK SC", sans-serif; }
.watermark strong { font-size: 21px; line-height: 28px; color: #6fa3dc; }
.watermark span { font-size: 17px; line-height: 13px; color: #66bd8e; -webkit-text-stroke: 1px #66bd8e; }

/* sheet tabs */
.sheet-tabs { display: flex; flex: 0 0 11px; overflow: hidden; border-top: 1px solid #999; font-size: 13px; color: #444; }
.sheet-tabs button { flex: none; width: 69px; height: 20px; border-right: 1px solid #999; }
.sheet-tabs .narrow { width: 63px; }
.sheet-tabs .lead { width: 101px; height: 20px; border-right: 1px solid #999; }
.sheet-tabs .active { background: #fff; color: #217346; margin-top: -1px; height: 22px; font-weight: 600; }
.sheet-tabs .add { margin: 5px 0 0 33px; }
.hscroll { display: flex; width: 594px; margin: 6px 10px 0 auto; }
.hscroll i { width: 15px; height: 16px; border: 1px solid #999; background: #fff; }
.hscroll .bar { width: 238px; }
.hscroll .track { flex: 1; border: 0; background: #f0f0f0; }

/* annotations over the window */
.overlay { position: absolute; z-index: 10; left: -1px; top: 0; pointer-events: none; }
.arrows { fill: none; stroke: #f00; stroke-width: 3; stroke-linecap: round; filter: drop-shadow(2px 2px 2px rgba(0, 0, 0, .7)); }
.arrows .head { fill: #f00; stroke-width: 1; }
```
